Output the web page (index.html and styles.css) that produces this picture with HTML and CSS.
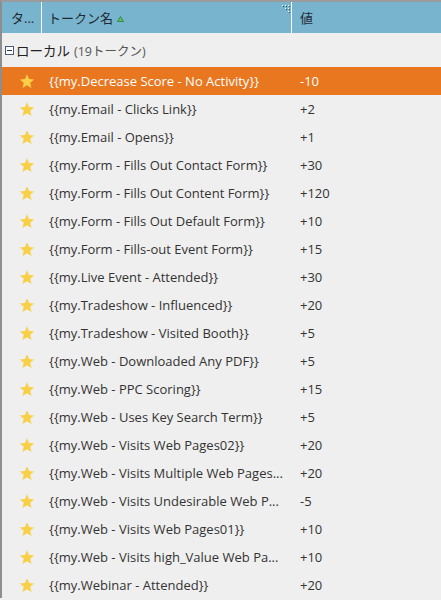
FILE: index.html
```html
<!DOCTYPE html>
<html>
<head>
<meta charset="utf-8">
<link rel="stylesheet" href="styles.css">
</head>
<body>
<div class="grid">
  <div class="head">
    <div class="hc c1">タ...</div>
    <div class="hc c2">トークン名 <svg class="sort" width="7" height="6" viewBox="0 0 7 6"><path d="M3.5 0.5 L6.5 5.5 L0.5 5.5 Z" fill="#5cc25c" stroke="#2f7a3a" stroke-width="0.8"/></svg>
      <svg class="grip" width="8" height="8" viewBox="0 0 8 8"><g fill="#fff"><rect x="0" y="0" width="1" height="1"/><rect x="3" y="0" width="1" height="1"/><rect x="6" y="0" width="1" height="1"/><rect x="3" y="3" width="1" height="1"/><rect x="6" y="3" width="1" height="1"/><rect x="6" y="6" width="1" height="1"/></g><g fill="#1d4f66"><rect x="1" y="1" width="1" height="1"/><rect x="4" y="1" width="1" height="1"/><rect x="7" y="1" width="1" height="1"/><rect x="4" y="4" width="1" height="1"/><rect x="7" y="4" width="1" height="1"/><rect x="7" y="7" width="1" height="1"/></g></svg>
    </div>
    <div class="hc c3">値</div>
  </div>
  <div class="group">
    <span class="tog"><svg width="9" height="9" viewBox="0 0 9 9"><rect x="0.5" y="0.5" width="8" height="8" fill="#fff" stroke="#4a5a78"/><rect x="2" y="4" width="5" height="1" fill="#2a3550"/></svg></span>
    <span class="gname">ローカル</span><span class="gcount">(19トークン)</span>
  </div>
  <div class="rows" id="rows"></div>
</div>
<script>
var data = [
["{{my.Decrease Score - No Activity}}","-10"],
["{{my.Email - Clicks Link}}","+2"],
["{{my.Email - Opens}}","+1"],
["{{my.Form - Fills Out Contact Form}}","+30"],
["{{my.Form - Fills Out Content Form}}","+120"],
["{{my.Form - Fills Out Default Form}}","+10"],
["{{my.Form - Fills-out Event Form}}","+15"],
["{{my.Live Event - Attended}}","+30"],
["{{my.Tradeshow - Influenced}}","+20"],
["{{my.Tradeshow - Visited Booth}}","+5"],
["{{my.Web - Downloaded Any PDF}}","+5"],
["{{my.Web - PPC Scoring}}","+15"],
["{{my.Web - Uses Key Search Term}}","+5"],
["{{my.Web - Visits Web Pages02}}","+20"],
["{{my.Web - Visits Multiple Web Pages...","+20"],
["{{my.Web - Visits Undesirable Web P...","-5"],
["{{my.Web - Visits Web Pages01}}","+10"],
["{{my.Web - Visits high_Value Web Pa...","+10"],
["{{my.Webinar - Attended}}","+20"]
];
var star = '<svg width="16" height="15" viewBox="0 0 24 23"><path d="M12 0.5 L15.1 7.6 L23 8.3 L17 13.5 L18.8 21.3 L12 17.2 L5.2 21.3 L7 13.5 L1 8.3 L8.9 7.6 Z" fill="#f9cf48"/></svg>';
var html = "";
data.forEach(function(d, i){
  html += '<div class="row' + (i===0 ? ' sel' : '') + '"><div class="c1 star">' + star + '</div><div class="c2 name">' + d[0] + '</div><div class="c3 val">' + d[1] + '</div></div>';
});
document.getElementById('rows').innerHTML = html;
</script>
</body>
</html>
```
FILE: styles.css
```css
html, body {
  margin: 0;
  padding: 0;
  background: #efefef;
}
body {
  font-family: "Open Sans", "Noto Sans CJK JP", sans-serif;
  font-size: 13px;
  color: #333;
  width: 441px;
  height: 600px;
  overflow: hidden;
}
.grid {
  border-top: 2px solid #9b9a9c;
  border-left: 2px solid #8e8e8e;
  height: 596px;
  background: #efefef;
}
.head {
  display: grid;
  grid-template-columns: 40px 250px 1fr;
  height: 31px;
  background: #79b4cf;
}
.hc {
  display: flex;
  align-items: center;
  color: #1f2b33;
  font-size: 13px;
  position: relative;
}
.head .c1 { padding-left: 9px; border-right: 1px solid #fff; }
.head .c2 { padding-left: 6px; border-right: 1px solid #fff; }
.head .c3 { padding-left: 8px; }
.sort { margin-left: 4px; margin-top: 2px; }
.grip { position: absolute; right: 1px; top: 3px; }
.group {
  height: 34px;
  display: flex;
  align-items: center;
  padding-left: 3px;
}
.tog { display: flex; align-items: center; margin-right: 2px; margin-top: 1px; }
.gname { font-size: 13.5px; color: #222; }
.gcount { font-size: 12.5px; color: #555; margin-left: 4px; }
.row {
  display: grid;
  grid-template-columns: 40px 251px 1fr;
  height: 28px;
  align-items: center;
}
.row.sel { background: #e9771f; color: #fff; }
.star { display: flex; justify-content: flex-start; padding-left: 17px; box-sizing: border-box; }
.name { padding-left: 7px; white-space: nowrap; overflow: hidden; }
.val { padding-left: 7px; }
```
